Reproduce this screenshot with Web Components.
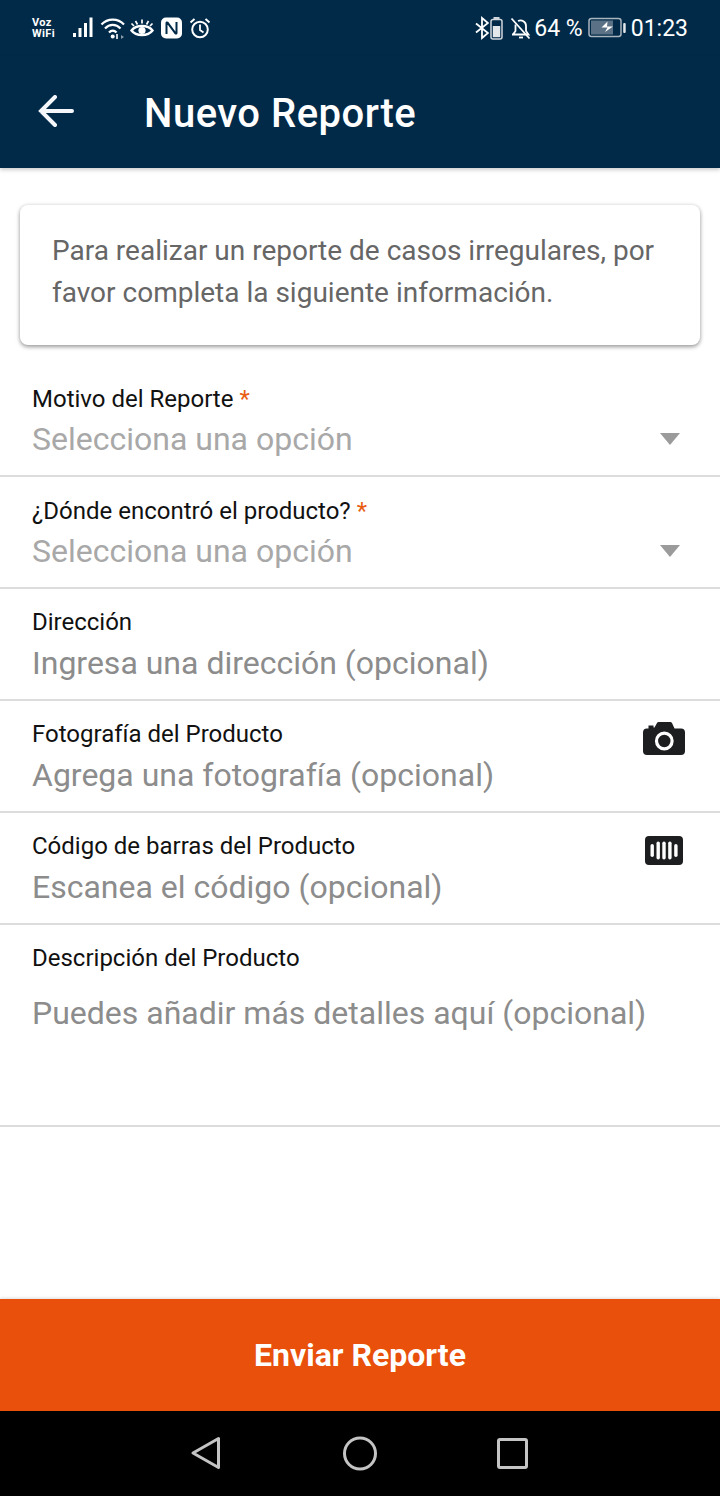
<!DOCTYPE html>
<html lang="es">
<head>
<meta charset="utf-8">
<title>Nuevo Reporte</title>
<style>
  html, body { margin: 0; height: 100%; }
  body { font-family: Roboto, "Noto Sans", sans-serif; background: #fff; }
  report-screen { height: 1496px; }
</style>
</head>
<body>
<report-screen>
  <status-bar slot="top"></status-bar>
  <app-bar slot="top" title="Nuevo Reporte"></app-bar>
  <info-card>Para realizar un reporte de casos irregulares, por favor completa la siguiente información.</info-card>
  <form-row label="Motivo del Reporte" required kind="select">Selecciona una opción</form-row>
  <form-row label="¿Dónde encontró el producto?" required kind="select">Selecciona una opción</form-row>
  <form-row label="Dirección">Ingresa una dirección (opcional)</form-row>
  <form-row label="Fotografía del Producto" kind="camera">Agrega una fotografía (opcional)</form-row>
  <form-row label="Código de barras del Producto" kind="barcode">Escanea el código (opcional)</form-row>
  <form-row label="Descripción del Producto" kind="area">Puedes añadir más detalles aquí (opcional)</form-row>
  <submit-button slot="bottom">Enviar Reporte</submit-button>
  <nav-bar slot="bottom"></nav-bar>
</report-screen>

<script>
class ReportScreen extends HTMLElement {
  constructor() {
    super();
    this.attachShadow({ mode: "open" });
    this.shadowRoot.innerHTML = /* html */`
    <style>
      :host { display: flex; flex-direction: column; width: 720px; }
      main { flex: 1; display: flex; flex-direction: column; }
    </style>
    <slot name="top"></slot>
    <main><slot></slot></main>
    <slot name="bottom"></slot>`;
  }
}

class StatusBar extends HTMLElement {
  constructor() {
    super();
    this.attachShadow({ mode: "open" });
    this.shadowRoot.innerHTML = /* html */`
    <style>
      :host {
        display: flex;
        justify-content: space-between;
        align-items: center;
        height: 56px;
        padding: 0 32px 0 32px;
        box-sizing: border-box;
        background: #012a49;
        color: #fff;
      }
      .side { display: flex; align-items: center; }
      .voz { font: 700 11px/11px Roboto, sans-serif; width: 41px; letter-spacing: .4px; }
      .txt { font: 400 23px/28px Roboto, sans-serif; padding-top: 2px; }
      svg { display: block; flex: none; }
    </style>
    <div class="side">
      <div class="voz">Voz<br>WiFi</div>
      <svg width="24" height="24" viewBox="0 0 24 24" fill="#fff">
        <rect x="0" y="17" width="3" height="4"/><rect x="5.500" y="12" width="3" height="9"/><rect x="11" y="7" width="3" height="14"/><rect x="16.500" y="1.500" width="3" height="19.500"/>
      </svg>
      <svg width="26" height="24" viewBox="0 0 26 24" fill="none" stroke="#fff" stroke-width="2.200" style="margin-left:3px">
        <path d="M1.500 8.500C7.500 2 18 2 24 8.500"/><path d="M5 12.500C9.500 7.700 16 7.700 20.500 12.500"/><path d="M9 16.500C11.300 14 14.200 14 16.500 16.500"/>
        <circle cx="12.700" cy="20.500" r="2" fill="#fff" stroke="none"/><path d="M17 18v5" stroke-width="1.600"/><path d="M21 19l3 2-3 2z" fill="#8b9aa8" stroke="none"/>
      </svg>
      <svg width="24" height="22" viewBox="0 0 24 22" fill="none" stroke="#fff" stroke-width="2.400" style="margin-left:4px">
        <path d="M1.500 13.500C6 7.500 18 7.500 22.500 13.500C18 19.500 6 19.500 1.500 13.500Z"/>
        <circle cx="12" cy="13.500" r="3.600" fill="#fff" stroke="none"/>
        <path d="M12 2.500v4M5.500 4l2 3.500M18.500 4l-2 3.500M1.500 6.500l2.500 2.500M22.500 6.500L20 9" stroke-width="1.700"/>
      </svg>
      <svg width="21" height="22" viewBox="0 0 21 22" style="margin-left:7px">
        <rect x="0" y="0.500" width="21" height="21" rx="5" fill="#fff"/>
        <path d="M5.500 17V6q0-1 1-.4l8 10.800q1 .6 1-.4V5" fill="none" stroke="#012a49" stroke-width="2"/>
      </svg>
      <svg width="22" height="22" viewBox="0 0 22 22" fill="none" stroke="#fff" stroke-width="2" style="margin-left:7px">
        <circle cx="11" cy="12.500" r="7.800"/><path d="M11 7.500v5.500l3.500 2.500" stroke-width="1.800"/>
        <path d="M1.500 5.500L5.500 2M20.500 5.500L16.500 2"/>
      </svg>
    </div>
    <div class="side">
      <svg width="14" height="24" viewBox="0 0 14 24" fill="none" stroke="#fff" stroke-width="1.800">
        <path d="M1 7.500l12 9.500-6 5V2l6 5-12 9.500"/>
      </svg>
      <svg width="13" height="24" viewBox="0 0 13 24" style="margin-left:1px">
        <rect x="3.500" y="1" width="6" height="2.500" fill="#cfd6dc"/>
        <rect x="1" y="3.500" width="11" height="19.500" rx="2" fill="none" stroke="#cfd6dc" stroke-width="1.500"/>
        <rect x="2.800" y="10" width="7.400" height="11.200" fill="#e4e7ea"/>
      </svg>
      <svg width="22" height="24" viewBox="0 0 22 24" fill="none" stroke="#fff" stroke-width="1.800" style="margin-left:7px">
        <path d="M2 18.500h16.500l-2.500-3.500V10a5.500 5.500 0 0 0-8-5M5.500 8.500V15L3 18.500"/>
        <path d="M9 21.500h4"/><path d="M1.500 2.500l18 20"/>
      </svg>
      <span class="txt" style="margin-left:2px">64 %</span>
      <svg width="38" height="22" viewBox="0 0 38 22" style="margin-left:5px">
        <rect x="1" y="1.500" width="32" height="18" rx="2.500" fill="none" stroke="#a9b4bd" stroke-width="1.500"/>
        <rect x="3" y="3.500" width="22" height="14" fill="#5b7286"/>
        <path d="M19.500 4.500L13.500 10.500h6L17 15l8-5.500h-6z" fill="#fff"/>
        <rect x="35.200" y="6" width="2.500" height="10" rx="1" fill="#e4e7ea"/>
      </svg>
      <span class="txt" style="margin-left:5px">01:23</span>
    </div>`;
  }
}

class AppBar extends HTMLElement {
  constructor() {
    super();
    this.attachShadow({ mode: "open" });
  }

  connectedCallback() {
    this.shadowRoot.innerHTML = /* html */`
    <style>
      :host {
        display: flex;
        align-items: center;
        height: 112px;
        padding-top: 4px;
        box-sizing: border-box;
        background: #012a49;
        color: #fff;
        box-shadow: 0 2px 4px #0003;
      }
      svg { margin: -7px 0 0 38px; flex: none; }
      h1 { margin: 0 0 0 70px; font: 500 40px/44px Roboto, sans-serif; letter-spacing: .5px; }
    </style>
    <svg width="36" height="32" viewBox="0 0 36 32" fill="none" stroke="#f6f7fa" stroke-width="4" stroke-linecap="round">
      <path d="M34 16H3M17 2L3 16l14 14"/>
    </svg>
    <h1>${this.getAttribute("title")}</h1>`;
  }
}

class InfoCard extends HTMLElement {
  constructor() {
    super();
    this.attachShadow({ mode: "open" });
    this.shadowRoot.innerHTML = /* html */`
    <style>
      :host {
        display: block;
        margin: 37px 20px 20px;
        height: 140px;
        padding: 25px 32px 0;
        box-sizing: border-box;
        border-radius: 8px;
        background: #fff;
        box-shadow: 0 2px 4px #0000005c, 0 0 4px #0000001a;
        color: #666;
        font: 400 28px/42px Roboto, sans-serif;
      }
    </style>
    <slot></slot>`;
  }
}

const ROW_ICONS = {
  select: `<svg class="arrow" width="20" height="12" viewBox="0 0 20 12"><path d="M0 0h20L10 12z" fill="#9b9b9b"/></svg>`,
  camera: `<svg class="icon" width="42" height="33" viewBox="0 0 42 33">
    <path d="M4 6.500h1.500V3.500h5v2h1L14 1q.6-1 1.600-1h11.800q1 0 1.600 1L31.500 6.500H38q4 0 4 4V29q0 4-4 4H4q-4 0-4-4V10.500q0-4 4-4z" fill="#1d1e20"/>
    <circle cx="21.300" cy="19" r="7.800" fill="none" stroke="#fff" stroke-width="3.200"/>
  </svg>`,
  barcode: `<svg class="icon" width="38" height="29" viewBox="0 0 38 29">
    <rect width="38" height="29" rx="4" fill="#1d1e20"/>
    <g fill="#fff"><rect x="5.500" y="8" width="3.400" height="13" rx="1.700"/><rect x="11.500" y="5.500" width="3.400" height="18" rx="1.700"/><rect x="17.300" y="5.500" width="3.400" height="18" rx="1.700"/><rect x="23.200" y="5.500" width="3.400" height="18" rx="1.700"/><rect x="29.200" y="8" width="3.400" height="13" rx="1.700"/></g>
  </svg>`
};

class FormRow extends HTMLElement {
  constructor() {
    super();
    this.attachShadow({ mode: "open" });
  }

  connectedCallback() {
    const kind = this.getAttribute("kind") || "";
    const star = this.hasAttribute("required") ? `<span class="star">*</span>` : "";
    this.shadowRoot.innerHTML = /* html */`
    <style>
      :host {
        display: grid;
        grid-template-columns: 1fr auto;
        align-content: start;
        height: 112px;
        padding: 19px 0 0 32px;
        box-sizing: border-box;
        border-bottom: 2px solid #dcdcdc;
      }
      :host([kind="select"]) { padding-top: 20px; }
      :host([kind="area"]) { height: 202px; }
      .label { font: 400 24px/28px Roboto, sans-serif; color: #111; }
      .star { color: #e85d12; }
      .value { grid-column: 1; font: 400 32px/40px Roboto, sans-serif; color: #8c8c8c; margin-top: 7px; }
      :host([kind="select"]) .value { color: #a8a8a8; margin-top: 6px; }
      :host([kind="area"]) .value { margin-top: 21px; }
      .side { grid-column: 2; grid-row: 1 / span 2; }
      .arrow { display: block; margin: 48px 40px 0 0; }
      :host([kind="camera"]) .icon { display: block; margin: 2px 35px 0 0; }
      :host([kind="barcode"]) .icon { display: block; margin: 4px 37px 0 0; }
    </style>
    <div class="label">${this.getAttribute("label")}${star ? " " + star : ""}</div>
    <div class="value"><slot></slot></div>
    <div class="side">${ROW_ICONS[kind] || ""}</div>`;
  }
}

class SubmitButton extends HTMLElement {
  constructor() {
    super();
    this.attachShadow({ mode: "open" });
    this.shadowRoot.innerHTML = /* html */`
    <style>
      :host {
        display: flex;
        align-items: center;
        justify-content: center;
        height: 112px;
        background: #e8500b;
        color: #fff;
        font: 700 32px/36px Roboto, sans-serif;
        box-shadow: 0 -1px 3px #0002;
      }
    </style>
    <slot></slot>`;
  }
}

class NavBar extends HTMLElement {
  constructor() {
    super();
    this.attachShadow({ mode: "open" });
    this.shadowRoot.innerHTML = /* html */`
    <style>
      :host { display: block; height: 85px; background: #000; }
      svg { display: block; }
    </style>
    <svg width="720" height="85" viewBox="0 0 720 85" fill="none" stroke="#c4c4c4" stroke-width="3" stroke-linejoin="round">
      <path d="M218.500 27.500v29L193 42z"/>
      <circle cx="360" cy="42.500" r="15.500"/>
      <rect x="498.500" y="28.500" width="28" height="28" rx="1.500"/>
    </svg>`;
  }
}

customElements.define("report-screen", ReportScreen);
customElements.define("status-bar", StatusBar);
customElements.define("app-bar", AppBar);
customElements.define("info-card", InfoCard);
customElements.define("form-row", FormRow);
customElements.define("submit-button", SubmitButton);
customElements.define("nav-bar", NavBar);
</script>
</body>
</html>
